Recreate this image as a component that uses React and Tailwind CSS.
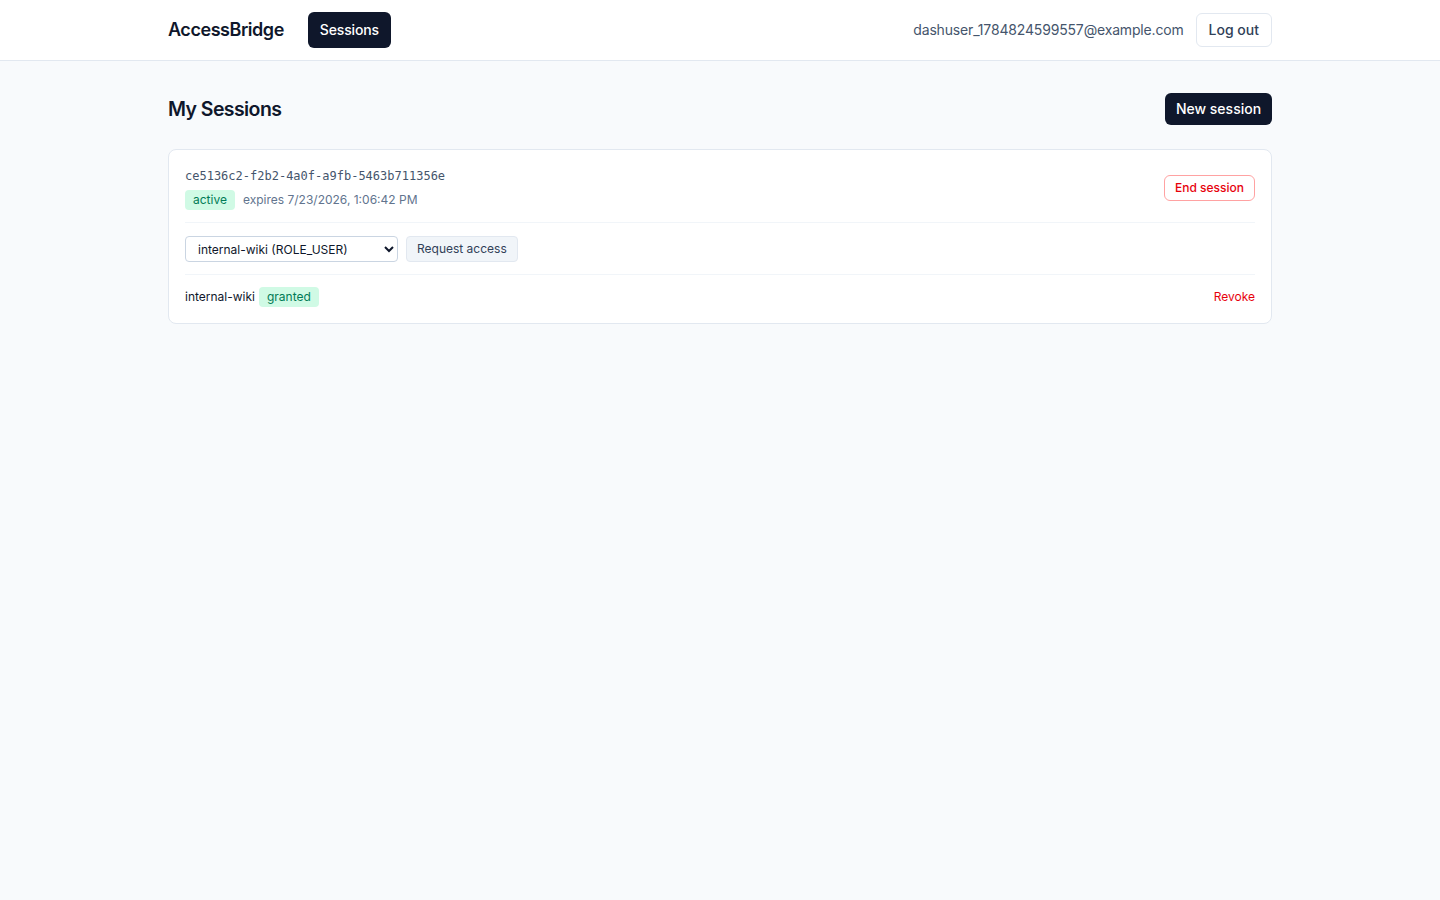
import React from "react";

export default function App() {
  return (
    <div className="min-h-screen bg-[#f8fafc] text-slate-900" style={{ fontFamily: "Inter, 'Noto Sans', sans-serif" }}>
      <header className="bg-white border-b border-slate-200">
        <div className="max-w-6xl mx-auto px-6 h-[60px] flex items-center justify-between">
          <div className="flex items-center gap-6">
            <span className="text-lg font-semibold text-slate-900 tracking-[-0.025em]">AccessBridge</span>
            <button className="h-9 w-[83px] rounded-md bg-slate-900 text-white text-sm font-medium tracking-[-0.01em]">Sessions</button>
          </div>
          <div className="flex items-center gap-3">
            <span className="text-sm text-slate-600 tracking-[-0.012em]">dashuser_1784824599557@example.com</span>
            <button className="h-[34px] px-3 rounded-md border border-slate-200 bg-white text-sm text-slate-700 font-medium">Log out</button>
          </div>
        </div>
      </header>
      <main className="max-w-6xl mx-auto px-6 py-8">
        <div className="flex items-center justify-between">
          <h1 className="text-[19.5px] font-semibold text-slate-900 tracking-[-0.03em] leading-8">My Sessions</h1>
          <button className="h-8 w-[107px] rounded-md bg-slate-900 text-white text-sm font-medium">New session</button>
        </div>
        <div className="mt-6 bg-white border border-slate-200 rounded-lg p-4">
          <div className="flex items-center justify-between pb-3">
            <div>
              <div className="text-xs leading-5 text-slate-600" style={{ fontFamily: "'DejaVu Sans Mono', 'Liberation Mono', monospace" }}>
                ce5136c2-f2b2-4a0f-a9fb-5463b711356e
              </div>
              <div className="mt-1 flex items-center gap-2">
                <span className="px-2 h-5 flex items-center rounded bg-emerald-100 text-emerald-700 text-xs">active</span>
                <span className="text-xs text-slate-500">expires 7/23/2026, 1:06:42 PM</span>
              </div>
            </div>
            <button className="h-[26px] px-2.5 rounded-md border border-red-300 text-red-600 text-xs font-medium bg-white">End session</button>
          </div>
          <div className="border-t border-slate-100 pt-[13px] pb-3 flex items-center gap-2">
            <select className="h-[26px] w-[213px] px-2 rounded border border-slate-300 bg-white text-xs text-slate-900">
              <option>internal-wiki (ROLE_USER)</option>
            </select>
            <button className="h-[26px] px-2.5 rounded border border-slate-200 bg-slate-100 text-xs text-slate-700">Request access</button>
          </div>
          <div className="border-t border-slate-100 pt-3 flex items-center justify-between">
            <div className="flex items-center gap-1 text-xs text-slate-900">
              <span>internal-wiki</span>
              <span className="px-2 h-5 flex items-center rounded bg-emerald-100 text-emerald-700 text-xs">granted</span>
            </div>
            <button className="text-xs text-red-600">Revoke</button>
          </div>
        </div>
      </main>
    </div>
  );
}
